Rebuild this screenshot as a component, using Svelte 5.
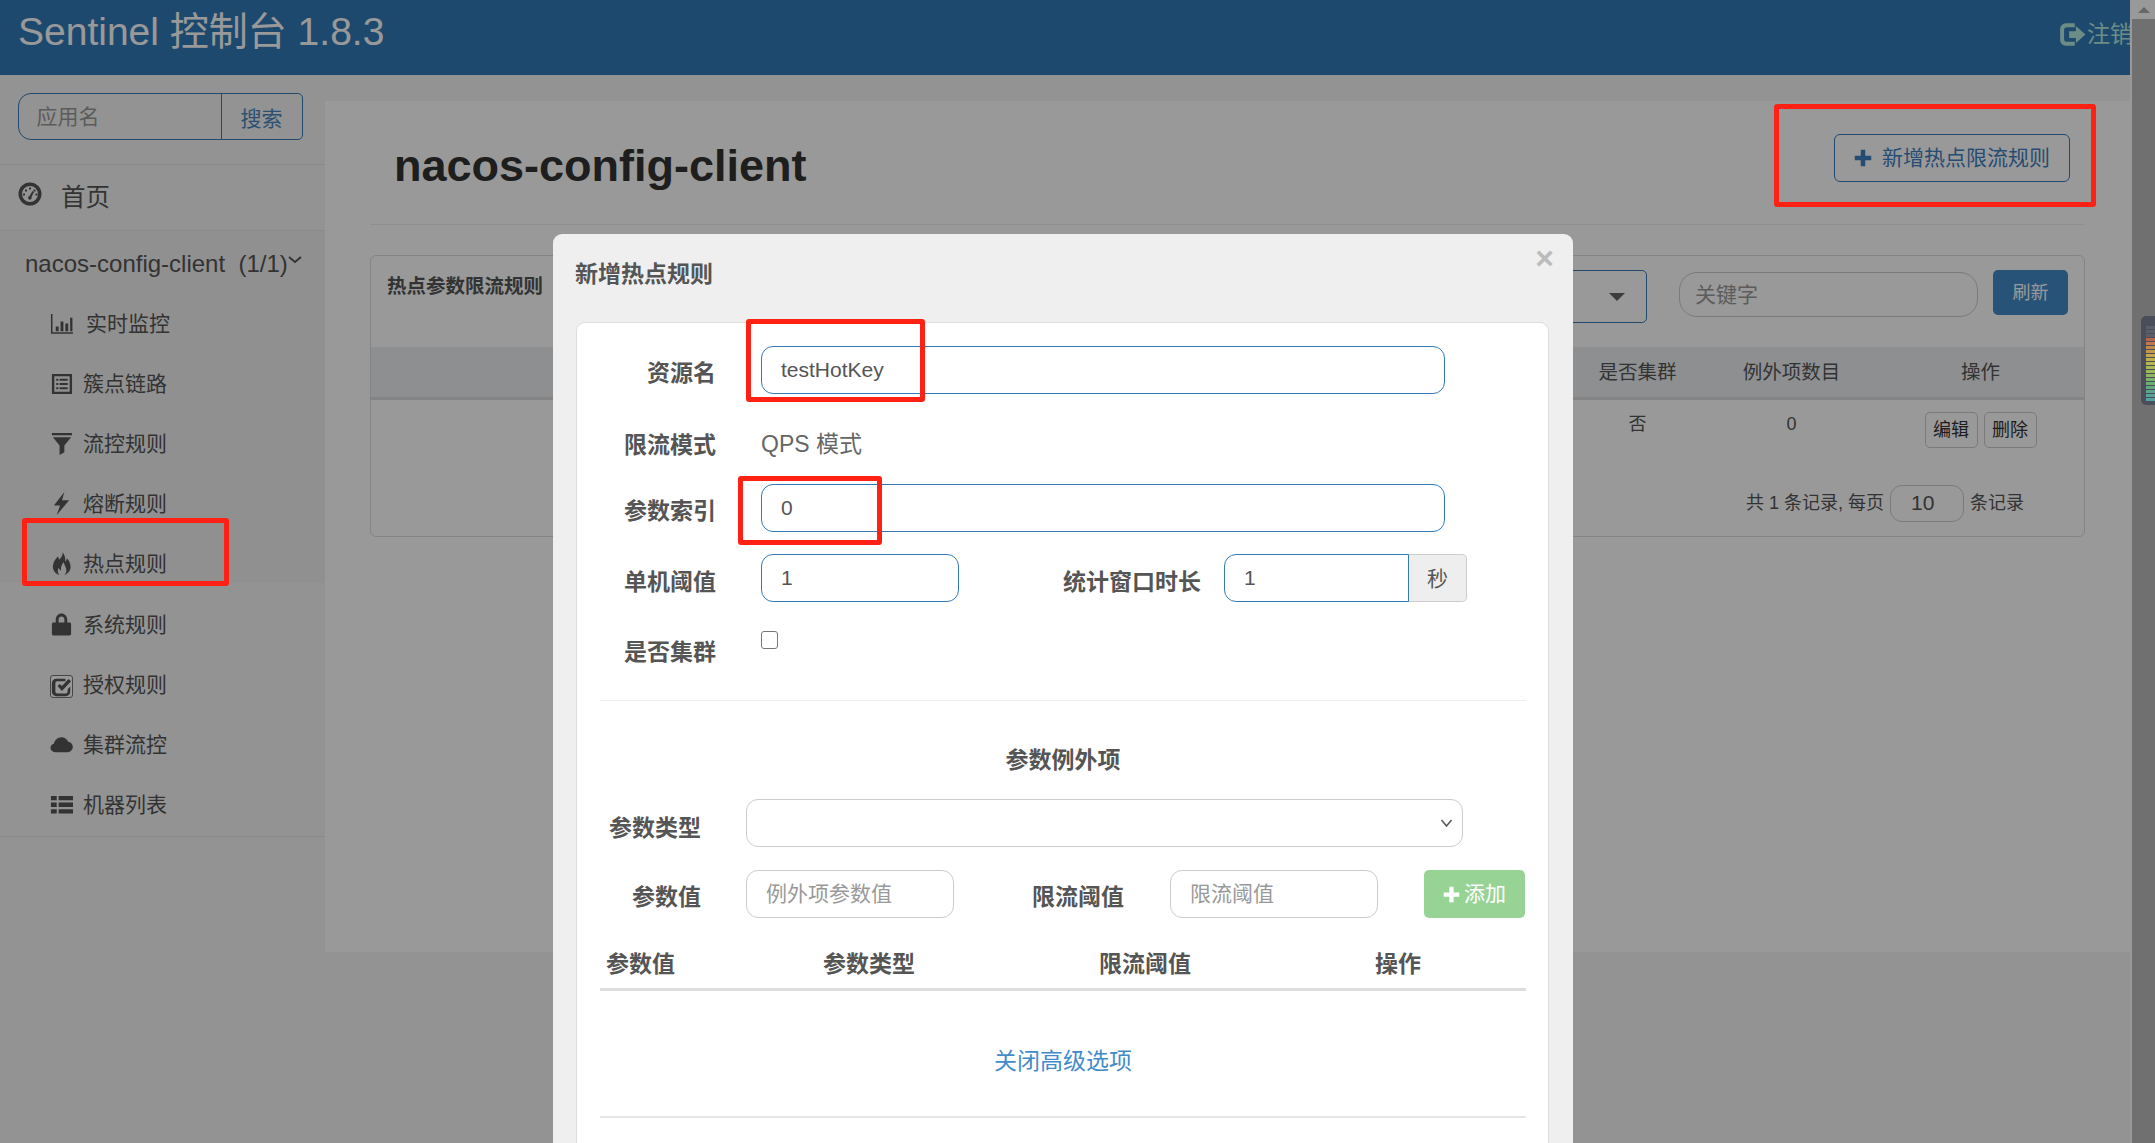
<script>
  const lower = [
    { t: '系统规则', i: 'lock' },
    { t: '授权规则', i: 'check' },
    { t: '集群流控', i: 'cloud' },
    { t: '机器列表', i: 'list' }
  ];
  const upper = [
    { t: '实时监控', i: 'stats' },
    { t: '簇点链路', i: 'alt' },
    { t: '流控规则', i: 'filter' },
    { t: '熔断规则', i: 'flash' },
    { t: '热点规则', i: 'fire' }
  ];
  const meter = ['#5a5e68','#5a5e68','#5a5e68','#b8654a','#c0784c','#c2884c','#c4984c','#c4a64c','#c0b04c','#b8b650','#aab854','#9cb858','#8cb660','#7cb268','#6cae70','#60aa80','#58a690','#54a498','#52a2a0'];
</script>

{#snippet icon(name)}
  <svg class="ico {name}" viewBox="0 0 24 24" aria-hidden="true">
    {#if name === 'stats'}
      <path d="M1 2h1.6v19H24v1.6H1z" /><path d="M6 15h3v5H6zM11 10h3v10h-3zM16 12h3v8h-3zM21 6h2.4v14H21z" />
    {:else if name === 'alt'}
      <path fill-rule="evenodd" d="M2 2h21v21H2zM4.500 4.500v16h16v-16z" /><path d="M6.500 7h2.200v2.200H6.500zM10 7h8.500v2.200H10zM6.500 11.400h2.200v2.200H6.500zM10 11.400h8.500v2.200H10zM6.500 15.800h2.200V18H6.500zM10 15.800h8.500V18H10z" />
    {:else if name === 'filter'}
      <path d="M2 1h21v2.400H2zM3 5.500h19l-7 8.500v7l-5 3V14z" />
    {:else if name === 'flash'}
      <path d="M15 0L4 14h6.500L7 24l13-15.500h-7.500z" />
    {:else if name === 'fire'}
      <path d="M13 0C14 4 11 6 9.500 8 9 6.500 8.500 5.500 8.500 4.500 5 8 3 11.500 3 15.500 3 20 6.500 23.500 10 24 8 22 7.500 19.500 9 16.500 9.500 18 10.500 19 11.500 19.500 11 16 12 13 14.500 10.500 14.500 14 17.500 16 17 20 16.800 21.800 16 23 14.500 24 18.500 23.200 21.500 19.800 21.500 15.500 21.500 11.500 19.500 8.500 17.500 6.500 17.500 8 17 9 16 10 16 6 15.500 3 13 0z" />
    {:else if name === 'lock'}
      <path fill-rule="evenodd" d="M6 10V7c0-4 2.700-6.500 6-6.500S18 3 18 7v3h2.500c.8 0 1.500.7 1.500 1.500V22c0 .8-.7 1.500-1.500 1.500h-17C2.700 23.500 2 22.800 2 22V11.500C2 10.700 2.700 10 3.500 10zM9 10h6V7c0-2-1.300-3.300-3-3.300S9 5 9 7z" />
    {:else if name === 'check'}
      <path d="M6 3h10.500v3H7a2 2 0 0 0-2 2v10a2 2 0 0 0 2 2h10a2 2 0 0 0 2-2v-3l3-3v6a5 5 0 0 1-5 5H6a5 5 0 0 1-5-5V8a5 5 0 0 1 5-5z" /><path d="M7.500 11.500L10 9l2.500 2.500L20 3.500l3 2.500L12.500 17z" />
    {:else if name === 'cloud'}
      <path d="M5.500 20C2.500 20 .5 18 .5 15.500c0-2.200 1.500-3.800 3.500-4.300C4.800 7.500 8 4.500 12 4.500c3.200 0 5.800 1.900 7 4.700 2.800.4 4.800 2.700 4.800 5.500 0 3-2.400 5.300-5.300 5.300z" />
    {:else if name === 'list'}
      <path d="M1 3h6v4.500H1zM9 3h15v4.500H9zM1 10h6v4.500H1zM9 10h15v4.500H9zM1 17h6v4.500H1zM9 17h15v4.500H9z" />
    {:else if name === 'dash'}
      <path fill-rule="evenodd" d="M12 .5a11.500 11.500 0 1 1 0 23 11.500 11.500 0 0 1 0-23zM12 4a8 8 0 1 0 0 16 8 8 0 0 0 0-16z" />
      <path d="M11 5.500h2v2h-2zM7 7.500h2v2H7zM15.500 7.500h2v2h-2zM5 11.500h2v2H5zM17.500 11.500h2v2h-2zM14.500 9l1.500 1-2.500 5a1.800 1.800 0 1 1-2-1z" />
    {:else if name === 'plus'}
      <path d="M9 1h6v8h8v6h-8v8H9v-8H1V9h8z" />
    {:else if name === 'logout'}
      <path d="M6 2h8v3.500H7A2.500 2.500 0 0 0 4.500 8v8A2.500 2.500 0 0 0 7 18.500h7V22H6a5 5 0 0 1-5-5V7a5 5 0 0 1 5-5z" /><path d="M9 9h6V4.500l8.500 7.500L15 19.500V15H9z" />
    {/if}
  </svg>
{/snippet}

<div class="app">
  <div class="page">
    <header class="topbar">
      <span class="brand">Sentinel 控制台 1.8.3</span>
      <span class="logout">{@render icon('logout')}<span>注销</span></span>
    </header>

    <div class="body">
      <aside class="sidebar">
        <div class="search-box">
          <div class="search">
            <input class="search-input" placeholder="应用名" />
            <button class="search-btn">搜索</button>
          </div>
        </div>
        <div class="home">{@render icon('dash')}<span>首页</span></div>
        <div class="group-top">
          <div class="app-title"><span>nacos-config-client&nbsp; (1/1)</span>
            <svg class="chev" viewBox="0 0 14 8"><path d="M1 1l6 5 6-5" /></svg>
          </div>
          {#each upper as m}
            <div class="item">{@render icon(m.i)}<span>{m.t}</span></div>
          {/each}
        </div>
        <div class="group-bottom">
          {#each lower as m}
            <div class="item">{@render icon(m.i)}<span>{m.t}</span></div>
          {/each}
        </div>
      </aside>

      <main class="main">
        <div class="title-row">
          <h1>nacos-config-client</h1>
          <button class="add-rule">{@render icon('plus')}<span>新增热点限流规则</span></button>
        </div>

        <section class="panel">
          <div class="toolbar">
            <h2>热点参数限流规则</h2>
            <div class="machine"><i class="caret"></i></div>
            <input class="keyword" placeholder="关键字" />
            <button class="refresh">刷新</button>
          </div>
          <div class="grid thead">
            <span></span><span>是否集群</span><span>例外项数目</span><span class="ops">操作</span>
          </div>
          <div class="grid trow">
            <span></span><span>否</span><span>0</span>
            <span class="ops"><button class="mini">编辑</button><button class="mini">删除</button></span>
          </div>
          <div class="pager">
            <span>共 1 条记录, 每页</span><input class="pagesize" value="10" /><span>条记录</span>
          </div>
        </section>
      </main>
    </div>

    <div class="backdrop"></div>

    <div class="modal">
      <div class="modal-head">
        <h3>新增热点规则</h3>
        <span class="close">×</span>
      </div>
      <div class="card">
        <div class="frow r1"><label>资源名</label><input class="fi wide" value="testHotKey" /></div>
        <div class="frow r2"><label>限流模式</label><span class="static">QPS 模式</span></div>
        <div class="frow r3"><label>参数索引</label><input class="fi wide" value="0" /></div>
        <div class="frow r4">
          <label>单机阈值</label><input class="fi small" value="1" />
          <label class="second">统计窗口时长</label>
          <div class="igroup"><input class="fi" value="1" /><span class="addon">秒</span></div>
        </div>
        <div class="frow r5"><label>是否集群</label><input class="check" type="checkbox" /></div>
        <hr class="sep first" />

        <h4>参数例外项</h4>
        <div class="xrow x1">
          <label>参数类型</label>
          <div class="select-wrap">
            <select class="xselect"><option></option></select>
            <svg class="select-chev" viewBox="0 0 12 8"><path d="M1 1l5 6 5-6" /></svg>
          </div>
        </div>
        <div class="xrow x2">
          <label>参数值</label><input class="xi" placeholder="例外项参数值" />
          <label class="xsecond">限流阈值</label><input class="xi" placeholder="限流阈值" />
          <button class="add">{@render icon('plus')}<span>添加</span></button>
        </div>
        <div class="xhead"><span>参数值</span><span>参数类型</span><span>限流阈值</span><span>操作</span></div>
        <a class="toggle" href="#top">关闭高级选项</a>
        <hr class="sep last" />
      </div>
    </div>

    <div class="mark mark-side"></div>
    <div class="mark mark-add"></div>
    <div class="mark mark-res"></div>
    <div class="mark mark-idx"></div>
  </div>

  <div class="scrollbar">
    <div class="sb-up"><i></i></div>
    <div class="meter">
      {#each meter as c}<b style="background:{c}"></b>{/each}
    </div>
  </div>
</div>

<style>
  :global(body) { margin: 0; background: #999; }
  :global(*) { box-sizing: border-box; }
  .app {
    display: flex; width: 2155px; height: 1143px; overflow: hidden;
    font-family: "Liberation Sans", "Noto Sans CJK SC", sans-serif;
    font-size: 21px; line-height: 30px; color: #555;
  }
  .page { position: relative; width: 2132px; height: 1143px; overflow: hidden; border-right: 2px solid #999; background: #f5f5f5; flex: none; }
  .ico { width: 24px; height: 24px; fill: currentColor; flex: none; display: block; }

  .topbar { height: 75px; background: #337ab7; display: flex; justify-content: space-between; padding: 10px 0 0 18px; overflow: hidden; }
  .brand { font-size: 39px; line-height: 44px; color: #fff; white-space: nowrap; }
  .logout { display: flex; align-items: center; gap: 4px; height: 48px; color: #b5ecdf; font-size: 23px; margin-right: -3px; }
  .logout .ico { width: 27px; height: 27px; }

  .body { display: flex; }
  .sidebar { width: 325px; flex: none; }
  .search-box { padding: 18px 22px 24px 18px; border-bottom: 1.5px solid #e7e7e7; height: 89.500px; }
  .search { display: flex; height: 47px; border: 1.5px solid #3a7ab8; border-radius: 13px 5px 5px 13px; overflow: hidden; }
  .search-input { flex: 1; min-width: 0; border: 0; background: transparent; padding: 0 17.500px; font: inherit; outline: none; }
  .search-input::placeholder { color: #999; }
  .search-btn { width: 81px; border: 0; border-left: 1.5px solid #3a7ab8; background: transparent; color: #4a86c0; font: inherit; padding: 4px 1px 0 0; }
  .home { height: 66px; display: flex; align-items: center; gap: 19px; padding-left: 18px; font-size: 24.500px; color: #555; border-bottom: 1.5px solid #e7e7e7; }
  .home span { margin-top: 2px; }
  .home .ico { margin-top: -6px; }
  .group-top { background: #f0f0f0; padding: 15px 0 0; height: 352px; }
  .group-bottom { display: flow-root; height: 254px; border-bottom: 1.5px solid #e7e7e7; }
  .app-title { height: 36px; margin-bottom: 1px; padding-left: 25px; display: flex; font-size: 24px; line-height: 36px; color: #555; white-space: nowrap; }
  .chev { width: 14px; height: 8px; fill: none; stroke: #555; stroke-width: 2; margin: 10px 0 0 0; }
  .item { height: 36px; margin-top: 24px; display: flex; align-items: center; gap: 10px; padding-left: 50px; white-space: nowrap; }
  .item .ico { width: 23px; height: 23px; }
  .item .ico.stats { margin-right: 3px; }

  .main { flex: 1; margin-top: 26px; height: 851px; background: #fff; padding: 0 45px; }
  .title-row { height: 124px; display: flex; justify-content: space-between; align-items: flex-start; padding: 33px 15px 0 24px; border-bottom: 1.5px solid #eee; }
  h1 { margin: 7px 0 0; font-size: 45px; line-height: 50px; font-weight: 700; color: #333; letter-spacing: 0; }
  .add-rule { width: 236px; height: 48px; border: 1.5px solid #3a7ab8; border-radius: 6px; background: transparent; color: #3f7fbf; font: inherit; display: flex; align-items: center; gap: 10px; padding: 0 0 0 19px; }
  .add-rule .ico { width: 18px; height: 18px; }
  .panel { margin-top: 30px; height: 282px; border: 1.5px solid #ddd; border-radius: 6px; }
  .toolbar { height: 91px; display: flex; align-items: flex-start; padding-top: 14px; }
  h2 { margin: 0 auto 0 16px; font-size: 19.500px; line-height: 32px; font-weight: 700; color: #555; }
  .machine { width: 247px; height: 53px; border: 1.5px solid #3a7ab8; border-radius: 0 5px 5px 0; display: flex; align-items: center; justify-content: flex-end; padding-right: 21px; }
  .caret { width: 0; height: 0; border-left: 8px solid transparent; border-right: 8px solid transparent; border-top: 8px solid #666; }
  .keyword { width: 299px; height: 45px; margin: 2px 15px 0 32px; border: 1.5px solid #ccc; border-radius: 18px; padding: 0 15px; font: inherit; background: transparent; outline: none; }
  .keyword::placeholder { color: #999; }
  .refresh { width: 75px; height: 45px; margin-right: 16px; border: 0; border-radius: 5px; background: #428bca; color: #fff; font: inherit; font-size: 18px; }
  .grid { display: grid; grid-template-columns: 1fr 154px 154px 213px; text-align: center; padding-right: 2.500px; }
  .thead { height: 53px; background: #edeff2; border-bottom: 3px solid #ddd; line-height: 51px; font-size: 19.500px; }
  .ops { padding-left: 11px; }
  .trow { height: 85px; padding-top: 9px; font-size: 18px; line-height: 30px; }
  .mini { width: 53px; height: 36px; padding: 0; border: 1.5px solid #ccc; border-radius: 5px; background: #fff; color: #333; font: inherit; font-size: 18px; margin: 3px 3px 0; }
  .pager { display: flex; justify-content: flex-end; align-items: center; gap: 6px; padding-right: 60px; font-size: 18px; height: 36px; }
  .pagesize { width: 74px; height: 37px; border: 1.5px solid #ccc; border-radius: 12px; padding: 0 20px; font: inherit; font-size: 21px; background: transparent; color: #555; }

  .backdrop { position: absolute; inset: 0; background: rgba(0, 0, 0, .4); }

  .modal { position: absolute; left: 553px; top: 234px; width: 1020px; background: #efefef; border-radius: 9px; padding-bottom: 100px; }
  .modal-head { height: 88px; display: flex; justify-content: space-between; align-items: flex-start; padding: 0 19px 0 22px; }
  h3 { margin: 25px 0 0; font-size: 23px; line-height: 30px; font-weight: 700; color: #555; }
  .close { font-family: "Liberation Sans", sans-serif; font-size: 32px; line-height: 32px; font-weight: 700; color: #bbb; margin-top: 8px; }
  .card { margin: 0 24px 0 23px; background: #fff; border: 1.5px solid #ddd; border-radius: 9px; padding: 22.500px 22px 100px 23px; }
  .frow { display: flex; align-items: flex-start; height: 48px; }
  .frow label, .xrow label { font-size: 23px; font-weight: 700; line-height: 48px; padding-top: 2px; text-align: right; color: #555; flex: none; white-space: nowrap; }
  .frow label { width: 116px; margin-right: 45px; }
  .r1 label, .r3 label { padding-top: 3.500px; }
  .r4 label { padding-top: 4.500px; }
  .r5 label { padding-top: 0; }
  .r2 { margin-top: 25px; } .r3 { margin-top: 17px; } .r4 { margin-top: 22px; } .r5 { margin-top: 26px; }
  .fi { height: 48px; border: 1.5px solid #337ab7; border-radius: 12px; padding: 0 19px; font: inherit; color: #555; outline: none; background: #fff; }
  .wide { width: 683.500px; }
  .small { width: 198px; }
  .frow label.second { width: auto; margin: 0 23px 0 104px; }
  .igroup { display: flex; width: 243px; }
  .igroup .fi { width: 185px; border-radius: 12px 0 0 12px; }
  .addon { flex: 1; height: 48px; background: #eee; border: 1.5px solid #ccc; border-left: 0; border-radius: 0 5px 5px 0; text-align: center; line-height: 48px; color: #555; }
  .static { line-height: 48px; font-size: 23px; color: #666; padding-top: 1.500px; }
  .check { appearance: none; width: 17px; height: 18px; margin: 3px 0 0; border: 1.5px solid #767676; border-radius: 3px; background: #fff; }
  .sep { border: 0; margin: 0; height: 1.500px; background: #eee; }
  .sep.first { margin-top: 24px; }
  h4 { margin: 43.500px 0 0; height: 30px; font-size: 23px; line-height: 30px; font-weight: 700; text-align: center; color: #555; }
  .xrow { display: flex; align-items: flex-start; height: 48px; }
  .xrow label { width: 101px; margin-right: 45px; }
  .x1 { margin-top: 24.500px; } .x2 { margin-top: 23px; }
  .x1 label { padding-top: 5px; }
  .x2 label { padding-top: 3px; }
  .select-wrap { position: relative; width: 717px; height: 48px; }
  .xselect { appearance: none; width: 100%; height: 48px; border: 1.5px solid #ccc; border-radius: 12px; background: #fff; font: inherit; }
  .select-chev { position: absolute; right: 10px; top: 20px; width: 13px; height: 8px; fill: none; stroke: #555; stroke-width: 1.500; pointer-events: none; }
  .xi { width: 208px; height: 48px; border: 1.5px solid #ccc; border-radius: 12px; padding: 0 19px; font: inherit; outline: none; background: #fff; }
  .xi::placeholder { color: #999; }
  .xrow label.xsecond { width: 92px; margin: 0 46px 0 78px; }
  .add { width: 101px; height: 48px; margin-left: 46px; border: 0; border-radius: 5px; background: #98d396; color: #fff; font: inherit; display: flex; align-items: center; justify-content: center; gap: 4px; padding: 0; }
  .add .ico { width: 17px; height: 17px; }
  .xhead { display: grid; grid-template-columns: 217px 276px 276px 1fr; height: 55px; margin-top: 18px; padding-left: 6px; border-bottom: 3px solid #ddd; font-size: 23px; font-weight: 700; line-height: 56px; color: #555; }
  .toggle { display: block; margin-top: 52px; height: 36px; text-align: center; font-size: 23px; line-height: 36px; color: #428bca; text-decoration: none; }
  .sep.last { margin-top: 37px; background: #e5e5e5; }

  .mark { position: absolute; border: 5px solid #ff2214; border-radius: 3px; }
  .mark-side { left: 22px; top: 518px; width: 207px; height: 68px; }
  .mark-add { left: 1774px; top: 104px; width: 322px; height: 103px; }
  .mark-res { left: 746px; top: 319px; width: 179px; height: 83px; }
  .mark-idx { left: 738px; top: 476px; width: 144px; height: 69px; }

  .scrollbar { position: relative; flex: 1; background: #707070; }
  .sb-up { height: 19px; background: #999; display: flex; align-items: center; justify-content: center; }
  .sb-up i { width: 0; height: 0; border-left: 6px solid transparent; border-right: 6px solid transparent; border-bottom: 6px solid #666; }
  .meter { position: absolute; left: 9px; top: 316px; width: 14px; height: 89px; background: #4a4e5a; border-radius: 5px 0 0 5px; padding: 10px 0 4px 5px; display: flex; flex-direction: column; justify-content: space-between; }
  .meter b { display: block; width: 9px; height: 3px; }
</style>
